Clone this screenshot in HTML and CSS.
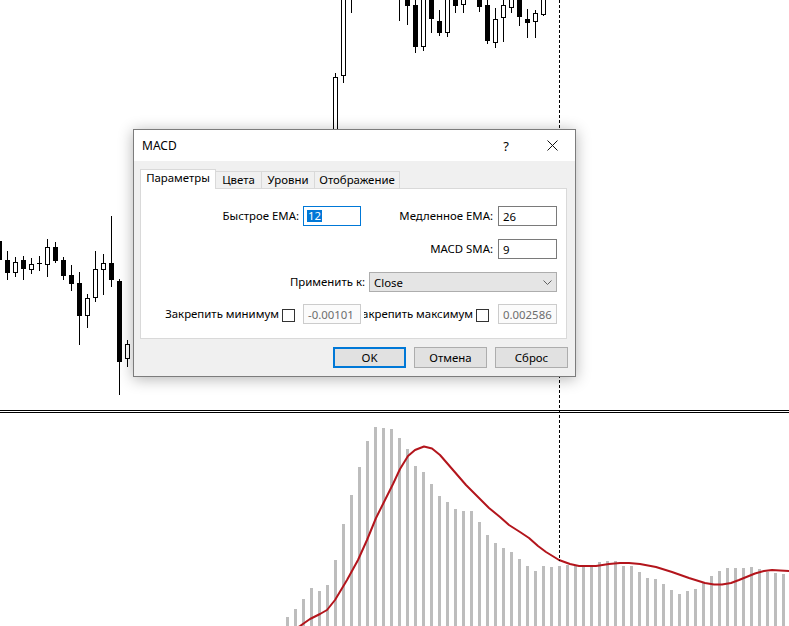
FILE: index.html
```html
<!DOCTYPE html>
<html lang="ru">
<head>
<meta charset="utf-8">
<title>MACD</title>
<link rel="stylesheet" href="styles.css">
</head>
<body>
<div class="screen">
  <svg class="chart" width="789" height="626" viewBox="0 0 789 626" xmlns="http://www.w3.org/2000/svg">
    <g class="hist">
      <path d="M287.5 617V626M295.5 609V626M303.5 599V626M311.5 588V626M319.5 591V626M327.5 585V626M335.5 560V626M343.5 524V626M351.5 495V626M359.5 467V626M367.5 441V626M375.5 427V626M383.5 428V626M391.5 429V626M399.5 438V626M407.5 449V626M415.5 466V626M423.5 472V626M431.5 484V626M439.5 496V626M447.5 502V626M455.5 509V626M463.5 511V626M471.5 511V626M479.5 522V626M487.5 535V626M495.5 543V626M503.5 548V626M511.5 552V626M519.5 559V626M527.5 566V626M535.5 571V626M543.5 566V626M551.5 567V626M559.5 566V626M567.5 565V626M575.5 566V626M583.5 567V626M591.5 567V626M599.5 562V626M607.5 561V626M615.5 561V626M623.5 566V626M631.5 566V626M639.5 572V626M647.5 578V626M655.5 579V626M663.5 584V626M671.5 590V626M679.5 594V626M687.5 591V626M695.5 589V626M703.5 582V626M711.5 576V626M719.5 571V626M727.5 568V626M735.5 568V626M743.5 568V626M751.5 567V626M759.5 569V626M767.5 572V626M775.5 573V626M783.5 574V626"/>
    </g>
    <path class="signal" d="M294 630L300 626L310 619L320 614L327 610L335 600L347 580L358 560L367 540L376 518L385 500L393 484L400 469L408 456L415 450L424 446.5L432 448.5L440 455L453 470L466 485L480 499L489 508L500 517L509 525L520 532L529 538L538 546L546 552L559 560L570 564L579 566L596 566L609 564L620 563L629 563L640 564L656 567L672 572L689 578L705 583L714 584.5L722 584.5L731 583L739 580L755 573.5L764 571L772 570L780 570.5L789 571"/>
    <g class="sep">
      <rect x="0" y="410" width="789" height="1"/>
      <rect x="0" y="412" width="789" height="1"/>
    </g>
    <path class="cross" d="M559.5 0V561"/>
    <path class="wicks" d="M7.5 251V280M15.5 257V277M23.5 256V280M31.5 258V274M39.5 256V271M47.5 239V277M55.5 242V263M63.5 257V280M71.5 265V291M79.5 272V345M87.5 294V328M95.5 251V302M103.5 254V295M111.5 216V287M119.5 279V395M127.5 340V367M335.5 73V200M343.5 -10V83M351.5 -10V13M399.5 -10V21M407.5 -10V25M415.5 -10V53M423.5 -10V51M431.5 -10V33M439.5 10V36M447.5 -10V37M455.5 -10V13M463.5 -10V13M479.5 -10V12M487.5 -10V44M495.5 8V48M503.5 -10V42M511.5 -10V13M519.5 -10V26M527.5 9V38M535.5 10V38M543.5 -10V16M37 263.5H42"/>
    <g class="bear">
      <rect x="-3" y="241" width="5" height="19"/>
      <rect x="5" y="260" width="5" height="13"/>
      <rect x="21" y="260" width="5" height="9"/>
      <rect x="53" y="247" width="5" height="14"/>
      <rect x="61" y="260" width="5" height="16"/>
      <rect x="69" y="275" width="5" height="9"/>
      <rect x="77" y="283" width="5" height="33"/>
      <rect x="109" y="263" width="5" height="17"/>
      <rect x="117" y="281" width="5" height="81"/>
      <rect x="405" y="-10" width="5" height="16"/>
      <rect x="413" y="5" width="5" height="42"/>
      <rect x="429" y="-10" width="5" height="29"/>
      <rect x="437" y="21" width="5" height="12"/>
      <rect x="453" y="-10" width="5" height="16"/>
      <rect x="477" y="-10" width="5" height="17"/>
      <rect x="485" y="5" width="5" height="36"/>
      <rect x="517" y="-10" width="5" height="27"/>
      <rect x="525" y="19" width="5" height="4"/>
    </g>
    <g class="bull">
      <rect x="13.5" y="262.5" width="4" height="10"/>
      <rect x="29.5" y="264.5" width="4" height="5"/>
      <rect x="45.5" y="247.5" width="4" height="17"/>
      <rect x="85.5" y="298.5" width="4" height="17"/>
      <rect x="93.5" y="269.5" width="4" height="28"/>
      <rect x="101.5" y="263.5" width="4" height="6"/>
      <rect x="125.5" y="344.5" width="4" height="14"/>
      <rect x="333.5" y="77.5" width="4" height="120"/>
      <rect x="341.5" y="-10" width="4" height="85.5"/>
      <rect x="421.5" y="-10" width="4" height="56"/>
      <rect x="445.5" y="-10" width="4" height="42"/>
      <rect x="461.5" y="-10" width="4" height="14"/>
      <rect x="493.5" y="19.5" width="4" height="23"/>
      <rect x="501.5" y="5.5" width="4" height="12"/>
      <rect x="509.5" y="-10" width="4" height="17"/>
      <rect x="533.5" y="13.5" width="4" height="8"/>
      <rect x="541.5" y="-10" width="4" height="24"/>
    </g>
  </svg>

  <div class="dialog">
    <div class="titlebar">
      <span class="title">MACD</span>
      <span class="tb-btn">?</span>
      <span class="tb-btn">
        <svg width="11" height="11" viewBox="0 0 11 11"><path d="M0.5 0.5L10.5 10.5M10.5 0.5L0.5 10.5" stroke="#111" stroke-width="1" fill="none"/></svg>
      </span>
    </div>
    <div class="dlg-body">
      <div class="tabs">
        <div class="tab active w-par">Параметры</div>
        <div class="tab w-col">Цвета</div>
        <div class="tab w-lev">Уровни</div>
        <div class="tab w-vis">Отображение</div>
      </div>
      <div class="panel">
        <div class="row">
          <div class="lbl w-l1">Быстрое EMA:</div>
          <div class="edit focus ml4 w-e1"><span class="sel">12</span></div>
          <div class="lbl w-l2">Медленное EMA:</div>
          <div class="edit ml5 w-e2">26</div>
        </div>
        <div class="row mt13">
          <div class="spacer"></div>
          <div class="lbl w-l2">MACD SMA:</div>
          <div class="edit ml5 w-e2">9</div>
        </div>
        <div class="row mt13">
          <div class="lbl w-l3">Применить к:</div>
          <div class="combo ml4">
            <span>Close</span>
            <svg class="chev" width="9" height="5" viewBox="0 0 9 5"><path d="M0.5 0.5L4.5 4.5L8.5 0.5" stroke="#606060" fill="none"/></svg>
          </div>
        </div>
        <div class="row mt12">
          <div class="lbl w-l4">Закрепить минимум</div>
          <div class="check ml3"></div>
          <div class="edit disabled ml8 w-e1">-0.00101</div>
          <div class="clip ml3"><span>Закрепить максимум</span></div>
          <div class="check ml3"></div>
          <div class="edit disabled ml9 w-e2">0.002586</div>
        </div>
      </div>
      <div class="buttons">
        <div class="btn default">OK</div>
        <div class="btn">Отмена</div>
        <div class="btn">Сброс</div>
      </div>
    </div>
  </div>
</div>
</body>
</html>
```

FILE: styles.css
```css
html, body {
  margin: 0;
  padding: 0;
  background: #fff;
}

.screen {
  position: relative;
  width: 789px;
  height: 626px;
  overflow: hidden;
  background: #fff;
}

.chart {
  display: block;
}

.hist path {
  stroke: #bdbdbd;
  stroke-width: 3;
  fill: none;
  shape-rendering: crispEdges;
}

.signal {
  fill: none;
  stroke: #b3151c;
  stroke-width: 2;
  stroke-linejoin: round;
  stroke-linecap: round;
}

.sep rect {
  fill: #000;
}

.cross {
  stroke: #000;
  stroke-width: 1;
  stroke-dasharray: 3 2;
  fill: none;
  shape-rendering: crispEdges;
}

.wicks {
  stroke: #000;
  stroke-width: 1;
  fill: none;
  shape-rendering: crispEdges;
}

.bear rect {
  fill: #000;
  shape-rendering: crispEdges;
}

.bull rect {
  fill: #fff;
  stroke: #000;
  stroke-width: 1;
  shape-rendering: crispEdges;
}

/* dialog window */
.dialog {
  position: absolute;
  left: 133px;
  top: 129px;
  width: 443px;
  height: 248px;
  box-sizing: border-box;
  border: 1px solid #7c7c7c;
  background: #f0f0f0;
  box-shadow: 0 2px 14px rgba(0, 0, 0, 0.3);
  font-family: "Noto Sans", "Open Sans", sans-serif;
  font-size: 11.4px;
  color: #000;
  display: flex;
  flex-direction: column;
}

.titlebar {
  height: 31px;
  flex: none;
  background: #fff;
  display: flex;
  align-items: center;
  font-size: 12px;
}

.title {
  flex: 1;
  padding-left: 8px;
}

.tb-btn {
  width: 46px;
  height: 31px;
  display: flex;
  align-items: center;
  justify-content: center;
  font-size: 13px;
}

.dlg-body {
  flex: 1;
  padding: 8px 7px 8px 6px;
  display: flex;
  flex-direction: column;
}

.tabs {
  height: 20px;
  display: flex;
  align-items: flex-end;
  position: relative;
  z-index: 1;
}

.tab {
  box-sizing: border-box;
  height: 17px;
  margin-bottom: 1px;
  margin-left: -1px;
  border: 1px solid #d9d9d9;
  border-bottom: none;
  background: #f0f0f0;
  text-align: center;
  line-height: 15px;
}

.tab.active {
  height: 20px;
  margin-bottom: 0;
  margin-left: 0;
  background: #fff;
  line-height: 15px;
  position: relative;
  z-index: 2;
}

.w-par { width: 76px; }
.w-col { width: 47px; }
.w-lev { width: 54px; }
.w-vis { width: 86px; }

.panel {
  box-sizing: border-box;
  height: 151px;
  margin-top: -1px;
  margin-right: 1px;
  border: 1px solid #d9d9d9;
  background: #fff;
  padding-top: 17px;
}

.row {
  display: flex;
  align-items: center;
  height: 20px;
}

.mt13 { margin-top: 13px; }
.mt12 { margin-top: 12px; }
.ml3 { margin-left: 3px; }
.ml4 { margin-left: 4px; }
.ml5 { margin-left: 5px; }
.ml8 { margin-left: 8px; }
.ml9 { margin-left: 9px; }

.lbl {
  flex: none;
  text-align: right;
  white-space: nowrap;
  line-height: 20px;
}

.w-l1 { width: 158px; }
.w-l2 { width: 132px; }
.w-l3 { width: 224px; }
.w-l4 { width: 138px; }

.spacer {
  flex: none;
  width: 220px;
}

.edit {
  flex: none;
  box-sizing: border-box;
  height: 20px;
  border: 1px solid #7a7a7a;
  background: #fff;
  padding: 0 4px;
  display: flex;
  align-items: center;
  white-space: nowrap;
}

.w-e1 { width: 58px; }
.w-e2 { width: 59px; }

.edit.focus {
  border-color: #0078d7;
  padding-left: 3px;
}

.sel {
  display: inline-block;
  background: #0078d7;
  color: #fff;
  line-height: 12px;
  height: 12px;
  padding: 0 1px;
}

.edit.disabled {
  border-color: #cccccc;
  background: #fbfbfb;
  color: #6d6d6d;
}

.combo {
  flex: none;
  box-sizing: border-box;
  width: 188px;
  height: 20px;
  border: 1px solid #adadad;
  background: #e5e5e5;
  display: flex;
  align-items: center;
  justify-content: space-between;
  padding: 0 4px 0 4px;
}

.chev {
  display: block;
}

.check {
  flex: none;
  box-sizing: border-box;
  width: 13px;
  height: 13px;
  border: 1px solid #333;
  background: #fff;
  align-self: flex-start;
  margin-top: 5px;
}

.clip {
  flex: none;
  width: 109px;
  overflow: hidden;
  display: flex;
  justify-content: flex-end;
  white-space: nowrap;
  line-height: 20px;
}

.clip span {
  flex: none;
}

.buttons {
  margin-top: 8px;
  display: flex;
  justify-content: flex-end;
}

.btn {
  box-sizing: border-box;
  width: 73px;
  height: 21px;
  margin-left: 8px;
  border: 1px solid #adadad;
  background: #e1e1e1;
  display: flex;
  align-items: center;
  justify-content: center;
}

.btn.default {
  border-color: #0078d7;
  box-shadow: inset 0 0 0 1px #0078d7;
}
```
